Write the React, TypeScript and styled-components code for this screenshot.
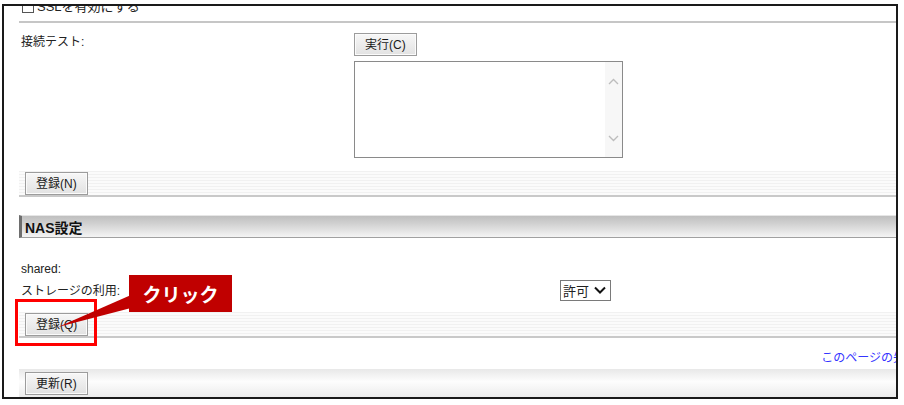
import React from "react";
import styled, { createGlobalStyle } from "styled-components";

const Global = createGlobalStyle`
  html, body { margin: 0; padding: 0; background: #fff; }
  body { font-family: "Liberation Sans", "Noto Sans CJK JP", sans-serif; font-size: 12px; color: #222; }
`;

const Page = styled.div`
  position: relative;
  width: 904px;
  height: 405px;
  overflow: hidden;
`;

const Frame = styled.div`
  margin: 4px 0 0 2px;
  width: 896px;
  height: 395px;
  box-sizing: border-box;
  border: 2px solid #1a1a1a;
  padding-left: 15px;
  overflow: hidden;
  display: flex;
  flex-direction: column;
`;

const CheckRow = styled.div`
  margin-top: -7px;
  height: 16px;
  line-height: 16px;
  padding-left: 3px;
  display: flex;
  align-items: center;
  gap: 3px;
  font-size: 13px;
`;

const CheckBox = styled.span`
  width: 10px;
  height: 10px;
  border: 1px solid #555;
  background: #fff;
`;

const Separator = styled.div`
  margin-top: 6px;
  height: 2px;
  background: #c6c6c6;
`;

const FormGrid = styled.div<{ $labelWidth: number; $mt: number }>`
  margin-top: ${(p) => p.$mt}px;
  display: grid;
  grid-template-columns: ${(p) => p.$labelWidth}px 1fr;
  align-items: start;
`;

const Label = styled.div`
  padding-left: 2px;
  line-height: 16px;
  padding-top: 1px;
`;

const ControlCol = styled.div`
  display: flex;
  flex-direction: column;
  align-items: flex-start;
  gap: 5px;
`;

const Btn = styled.button`
  height: 23px;
  padding: 0 10px;
  font-family: "Liberation Sans", "Noto Sans CJK JP", sans-serif;
  font-size: 12px;
  color: #1a1a1a;
  border: 1px solid #9c9c9c;
  background: linear-gradient(#f7f7f7, #e2e2e2);
  box-shadow: inset 0 0 0 1px #fbfbfb;
  line-height: 20px;
`;

const TextBox = styled.div`
  width: 269px;
  height: 97px;
  box-sizing: border-box;
  border: 1px solid #8a8a8a;
  display: flex;
  background: #fff;
`;

const Area = styled.textarea`
  flex: 1;
  border: none;
  resize: none;
  outline: none;
  background: transparent;
`;

const Track = styled.div`
  width: 17px;
  background: #f7f7f7;
  display: flex;
  flex-direction: column;
  justify-content: space-between;
  align-items: center;
  padding: 16px 0 15px;
`;

const Bar = styled.div<{ $mt: number }>`
  margin-top: ${(p) => p.$mt}px;
  padding: 1px 6px 0;
  box-sizing: border-box;
  height: 26px;
  border-bottom: 2px solid #c9c9c9;
  background: repeating-linear-gradient(to bottom, #f1f1f1 0 1px, #fbfbfb 1px 3px);
  display: flex;
  align-items: flex-start;
`;

const Header = styled.div`
  margin-top: 18px;
  height: 23px;
  box-sizing: border-box;
  border-left: 3px solid #6e6e6e;
  border-bottom: 1px solid #a0a0a0;
  border-top: 1px solid #e6e6e6;
  background: linear-gradient(#bfbfbf 0%, #d0d0d0 35%, #f4f4f4 100%);
  padding-left: 3px;
  font-weight: bold;
  font-size: 14px;
  color: #111;
  display: flex;
  align-items: center;
`;

const NasGrid = styled.div`
  margin-top: 20px;
  display: grid;
  grid-template-columns: 541px 1fr;
  grid-template-rows: 20px 22px;
  row-gap: 1px;
  align-items: center;
`;

const SelectBox = styled.div`
  width: 51px;
  height: 21px;
  box-sizing: border-box;
  border: 1px solid #7a7a7a;
  display: flex;
  align-items: center;
  justify-content: space-between;
  padding: 0 4px 0 2px;
  font-size: 13px;
  background: #fff;
`;

const LinkRow = styled.div`
  height: 31px;
  box-sizing: border-box;
  padding-top: 12px;
  line-height: 16px;
  display: flex;
  justify-content: flex-end;
  margin-right: -33px;
`;

const PageLink = styled.a`
  color: #3535ff;
  text-decoration: none;
  font-size: 12px;
`;

const BottomBar = styled.div`
  flex: 1;
  padding: 3px 6px 0;
  background: linear-gradient(#e8e8e8, #fdfdfd 45%, #ececec);
`;

const Highlight = styled.div`
  position: absolute;
  left: 15px;
  top: 299px;
  width: 82px;
  height: 47px;
  box-sizing: border-box;
  border: 3px solid #ff0000;
`;

const Callout = styled.div`
  position: absolute;
  left: 129px;
  top: 275px;
  width: 103px;
  height: 37px;
  background: #c00000;
  color: #fff;
  font-family: "Noto Sans CJK JP", sans-serif;
  font-weight: bold;
  font-size: 19px;
  display: flex;
  align-items: center;
  justify-content: center;
`;

const Pointer = styled.svg`
  position: absolute;
  left: 0;
  top: 0;
  pointer-events: none;
`;

const Chevron = ({ up }: { up?: boolean }) => (
  <svg width="11" height="7" viewBox="0 0 11 7">
    <polyline
      points={up ? "1,6 5.5,1.5 10,6" : "1,1 5.5,5.5 10,1"}
      fill="none"
      stroke="#bdbdbd"
      strokeWidth="1.4"
    />
  </svg>
);

export default function App() {
  return (
    <Page>
      <Global />
      <Frame>
        <CheckRow>
          <CheckBox />
          <span>SSLを有効にする</span>
        </CheckRow>
        <Separator />
        <FormGrid $labelWidth={335} $mt={10}>
          <Label>接続テスト:</Label>
          <ControlCol>
            <Btn>実行(C)</Btn>
            <TextBox>
              <Area />
              <Track>
                <Chevron up />
                <Chevron />
              </Track>
            </TextBox>
          </ControlCol>
        </FormGrid>
        <Bar $mt={13}>
          <Btn>登録(N)</Btn>
        </Bar>
        <Header>NAS設定</Header>
        <NasGrid>
          <Label>shared:</Label>
          <div />
          <Label>ストレージの利用:</Label>
          <SelectBox>
            <span>許可</span>
            <svg width="12" height="8" viewBox="0 0 12 8">
              <polyline points="1,1.5 6,6.5 11,1.5" fill="none" stroke="#111" strokeWidth="2" />
            </svg>
          </SelectBox>
        </NasGrid>
        <Bar $mt={11}>
          <Btn>登録(Q)</Btn>
        </Bar>
        <LinkRow>
          <PageLink href="#">このページの先頭へ</PageLink>
        </LinkRow>
        <BottomBar>
          <Btn>更新(R)</Btn>
        </BottomBar>
      </Frame>
      <Highlight />
      <Pointer width="904" height="405" viewBox="0 0 904 405">
        <polygon points="131,295 131,308 58,327" fill="#c00000" />
      </Pointer>
      <Callout>クリック</Callout>
    </Page>
  );
}
